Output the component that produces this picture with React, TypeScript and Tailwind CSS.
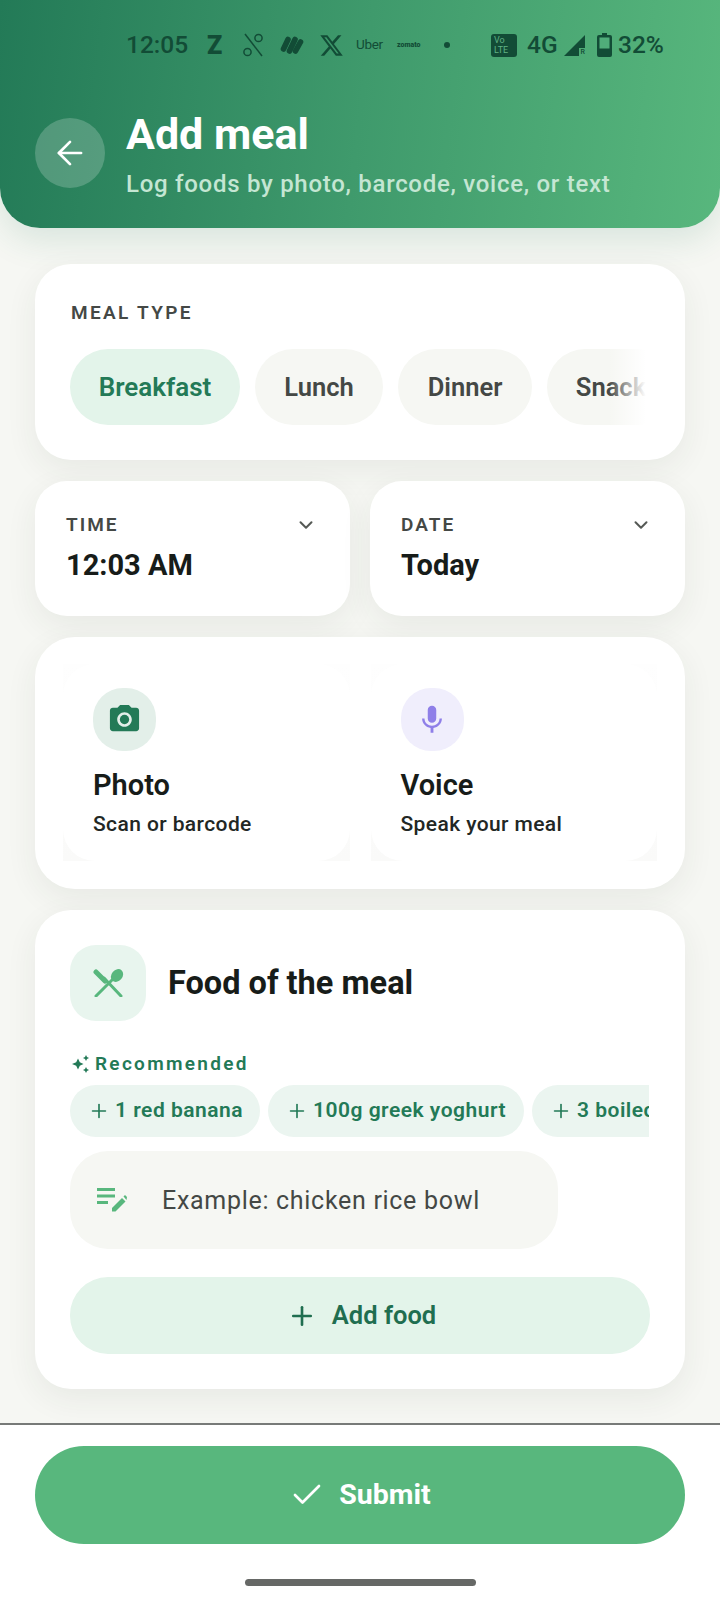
import React from "react";
import { ArrowLeft, Check, ChevronDown, Plus } from "lucide-react";
import { MdMic, MdPhotoCamera } from "react-icons/md";
import { FaXTwitter } from "react-icons/fa6";

const cardShadow = "shadow-[0_10px_32px_rgba(40,50,40,0.07)]";

function StatusBar() {
  return (
    <div className="mt-[28px] flex h-[34px] items-center pl-[126px] text-[24.5px] leading-none font-medium text-[#124c36]">
      <span className="w-[61px]">12:05</span>
      <span className="ml-[20px] w-[16px] text-[25px] font-black">Z</span>
      <svg className="ml-[20px]" width="21" height="24" viewBox="0 0 21 24" fill="none" stroke="currentColor" strokeWidth="1.5">
        <path d="M2 1l17 22" />
        <circle cx="15.5" cy="5" r="3.6" />
        <circle cx="4.5" cy="19" r="3.6" />
      </svg>
      <svg className="ml-[16px]" width="24" height="20" viewBox="0 0 24 20" fill="none" stroke="currentColor" strokeWidth="5.6" strokeLinecap="round">
        <path d="M3.500 14 8 4.500" />
        <path d="M9.500 16 15 4.500" />
        <path d="M15.500 16 20.500 7" />
      </svg>
      <FaXTwitter className="ml-[15px]" size={25} />
      <span className="ml-[12px] w-[27px] text-[13.5px] font-normal tracking-[-0.3px]">Uber</span>
      <span className="ml-[14px] w-[24px] text-[7px] font-black">zomato</span>
      <span className="ml-[23px] h-[6px] w-[6px] rounded-full bg-current" />
      <div className="ml-[41px] flex h-[23px] w-[26px] flex-col items-start justify-center rounded-[3px] bg-[#124c36] pl-[3px] text-[9px] leading-[10px] font-normal text-[#5fb184]">
        <span>Vo</span>
        <span>LTE</span>
      </div>
      <span className="ml-[10px] w-[30px]">4G</span>
      <div className="relative ml-[7px] h-[21px] w-[21px]">
        <svg width="21" height="21" viewBox="0 0 21 21" fill="currentColor">
          <path d="M21 0v13h-6v8H0z" />
        </svg>
        <span className="absolute right-0 bottom-0 text-[7px] leading-[8px]">R</span>
      </div>
      <svg className="ml-[12px]" width="15" height="24" viewBox="0 0 15 24">
        <path d="M5 0h5v2h3a2 2 0 0 1 2 2v18a2 2 0 0 1-2 2H2a2 2 0 0 1-2-2V4a2 2 0 0 1 2-2h3z" fill="currentColor" />
        <rect x="2.5" y="4.5" width="10" height="11" fill="#50ad7a" />
      </svg>
      <span className="ml-[6px]">32%</span>
    </div>
  );
}

function Header() {
  return (
    <header className="h-[228px] shrink-0 overflow-hidden rounded-b-[40px] bg-[linear-gradient(97deg,#237a57_0%,#3f9a6c_50%,#58b77d_100%)] shadow-[0_12px_34px_rgba(35,122,87,0.14)]">
      <StatusBar />
      <div className="mt-[49px] flex items-start pl-[35px]">
        <button className="mt-[7px] flex h-[70px] w-[70px] items-center justify-center rounded-full bg-white/20 text-white">
          <ArrowLeft size={38} strokeWidth={1.7} />
        </button>
        <div className="ml-[21px]">
          <h1 className="text-[43px] leading-[46px] font-bold text-white">Add meal</h1>
          <p className="mt-[12px] text-[24px] leading-[30px] font-medium tracking-[0.72px] text-[#c4e6d3]">Log foods by photo, barcode, voice, or text</p>
        </div>
      </div>
    </header>
  );
}

function MealType() {
  const others = [
    { name: "Lunch", w: "w-[128px]" },
    { name: "Dinner", w: "w-[134px]" },
    { name: "Snack", w: "w-[128px]" },
  ];
  return (
    <section className={`rounded-[36px] bg-white pt-[38px] pb-[35px] pl-[35px] ${cardShadow}`}>
      <div className="ml-[1px] text-[19px] leading-[22px] font-semibold tracking-[2.3px] text-[#444845]">MEAL TYPE</div>
      <div className="relative mt-[25px] flex h-[76px] w-[580px] gap-[15px] overflow-hidden">
        <div className="flex w-[170px] shrink-0 items-center justify-center rounded-[38px] bg-[#e3f4ea] text-[26px] font-semibold text-[#237a57]">Breakfast</div>
        {others.map((o) => (
          <div key={o.name} className={`flex ${o.w} shrink-0 items-center justify-center rounded-[38px] bg-[#f6f7f3] text-[25.5px] font-semibold text-[#444845]`}>
            {o.name}
          </div>
        ))}
        <div className="absolute top-0 right-0 h-full w-[42px] bg-gradient-to-r from-white/0 to-white to-90%" />
      </div>
    </section>
  );
}

function PickerCard({ label, value }: { label: string; value: string }) {
  return (
    <div className={`flex-1 rounded-[32px] bg-white pt-[33px] pr-[33px] pl-[31px] ${cardShadow}`}>
      <div className="flex items-center justify-between">
        <span className="text-[19px] leading-[22px] font-semibold tracking-[2px] text-[#444845]">{label}</span>
        <ChevronDown size={22} strokeWidth={2.2} className="text-[#555955]" />
      </div>
      <div className="mt-[12px] text-[29px] leading-[34px] font-bold text-[#171c19]">{value}</div>
    </div>
  );
}

function ActionTile({ icon, tint, title, sub }: { icon: React.ReactNode; tint: string; title: string; sub: string }) {
  return (
    <div className="flex-1 bg-gradient-to-b from-[#fefefe] to-[#fafaf9]">
      <div className="h-[197px] rounded-[32px] bg-white pt-[24px] pl-[30px]">
        <div className={`flex h-[63px] w-[63px] items-center justify-center rounded-[30px] ${tint}`}>{icon}</div>
        <div className="mt-[17px] text-[29px] leading-[34px] font-semibold text-[#171c19]">{title}</div>
        <div className="mt-[9px] text-[21px] leading-[26px] font-medium tracking-[0.4px] text-[#222724]">{sub}</div>
      </div>
    </div>
  );
}

function FoodIcon() {
  return (
    <svg width="31" height="28" viewBox="0 0 31 28" fill="none" stroke="#58b77d" strokeLinecap="round">
      <path d="M3 27 19 11" strokeWidth="3" />
      <ellipse cx="24" cy="6.5" rx="5.5" ry="7" transform="rotate(40 24 6.5)" fill="#58b77d" stroke="none" />
      <path d="M28 27 11 9" strokeWidth="3" />
      <path d="M3 3l9 9" strokeWidth="5" />
    </svg>
  );
}

function Sparkle() {
  return (
    <svg width="18" height="20" viewBox="0 0 18 20" fill="#237a57">
      <path d="M7 4.5 8.8 8.2 12.500 10 8.800 11.800 7 15.500 5.200 11.800 1 10 5.200 8.200z" />
      <path d="M15 1l1 2 2 1-2 1-1 2-1-2-2-1 2-1z" />
      <path d="M15 13l1 2 2 1-2 1-1 2-1-2-2-1 2-1z" />
    </svg>
  );
}

function NoteIcon() {
  return (
    <svg width="30" height="26" viewBox="0 0 30 26" fill="#58b77d">
      <rect x="0" y="1" width="18" height="3" />
      <rect x="0" y="7.500" width="18" height="3" />
      <rect x="0" y="14" width="11" height="3" />
      <path d="M15 21 25 11l3.500 3.500-10 10H15z" />
      <path d="M26.500 9.500 28 8l2 2-.5 3z" />
    </svg>
  );
}

function FoodCard() {
  const chips = [
    { name: "1 red banana", w: "w-[190px]" },
    { name: "100g greek yoghurt", w: "w-[256px]" },
    { name: "3 boiled eggs", w: "w-[190px]" },
  ];
  return (
    <section className={`rounded-[36px] bg-white px-[35px] pt-[35px] pb-[35px] ${cardShadow}`}>
      <div className="flex items-center">
        <div className="flex h-[76px] w-[76px] items-center justify-center rounded-[26px] bg-[#e8f5ee]">
          <FoodIcon />
        </div>
        <h2 className="ml-[22px] text-[32.5px] leading-[38px] font-bold text-[#171c19]">Food of the meal</h2>
      </div>
      <div className="mt-[32px] ml-[1px] flex h-[22px] items-center">
        <Sparkle />
        <span className="ml-[6px] text-[19px] leading-[22px] font-semibold tracking-[2.3px] text-[#237a57]">Recommended</span>
      </div>
      <div className="mt-[10px] flex h-[52px] w-[579px] gap-[8px] overflow-hidden">
        {chips.map((c) => (
          <div key={c.name} className={`flex ${c.w} shrink-0 items-center rounded-[26px] bg-[#ebf5f0] pl-[18px] text-[21px] font-semibold tracking-[0.5px] whitespace-nowrap text-[#237a57]`}>
            <Plus size={22} strokeWidth={1.8} className="mr-[5px] shrink-0" />
            {c.name}
          </div>
        ))}
      </div>
      <div className="mt-[14px] flex h-[98px] w-[488px] items-center rounded-[38px] bg-[#f6f7f3] pl-[27px]">
        <NoteIcon />
        <span className="mt-[2px] ml-[35px] text-[25px] tracking-[0.7px] text-[#444845]">Example: chicken rice bowl</span>
      </div>
      <button className="mt-[28px] flex h-[77px] w-[580px] items-center justify-center rounded-[38px] bg-[#e3f4ea] text-[25.5px] font-semibold text-[#1f6e50]">
        <Plus size={30} strokeWidth={2.1} className="ml-[3px]" />
        <span className="ml-[15px]">Add food</span>
      </button>
    </section>
  );
}

function Footer() {
  return (
    <footer className="h-[177px] shrink-0 border-t-2 border-[#777a78] bg-white px-[35px] pt-[21px]">
      <button className="flex h-[98px] w-full items-center justify-center rounded-[49px] bg-[#58b77d] text-[28.5px] font-bold text-white">
        <Check size={36} strokeWidth={1.8} />
        <span className="ml-[14px]">Submit</span>
      </button>
      <div className="mx-auto mt-[35px] h-[7px] w-[231px] rounded-full bg-[#666866]" />
    </footer>
  );
}

export default function App() {
  return (
    <div className="flex h-[1600px] w-[720px] flex-col overflow-hidden bg-[#f6f7f3] font-[Roboto,sans-serif]">
      <Header />
      <main className="flex flex-1 flex-col px-[35px] pt-[36px]">
        <MealType />
        <div className="mt-[21px] flex h-[135px] gap-[20px]">
          <PickerCard label="TIME" value="12:03 AM" />
          <PickerCard label="DATE" value="Today" />
        </div>
        <section className={`mt-[21px] flex gap-[21px] rounded-[40px] bg-white px-[28px] pt-[27px] pb-[28px] ${cardShadow}`}>
          <ActionTile icon={<MdPhotoCamera size={35} className="text-[#237a57]" />} tint="bg-[#e3efe9]" title="Photo" sub="Scan or barcode" />
          <ActionTile icon={<MdMic size={34} className="text-[#8f7fe8]" />} tint="bg-[#f0eefc]" title="Voice" sub="Speak your meal" />
        </section>
        <div className="mt-[21px]">
          <FoodCard />
        </div>
      </main>
      <Footer />
    </div>
  );
}
